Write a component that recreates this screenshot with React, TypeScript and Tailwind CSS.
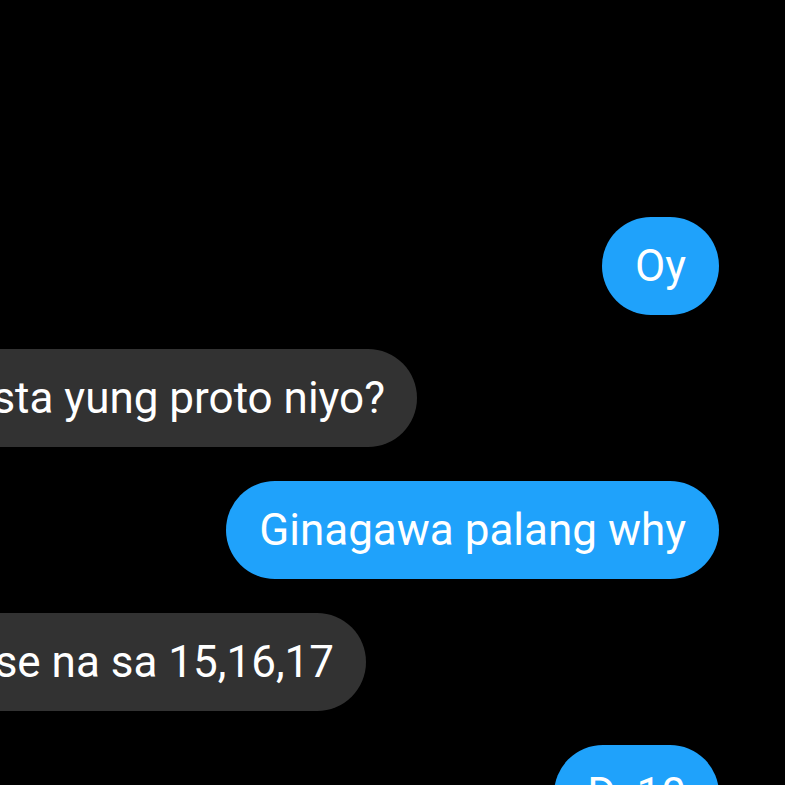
const messages = [
    { from: "me", text: "Oy" },
    { from: "them", text: "Kamusta yung proto niyo?" },
    { from: "me", text: "Ginagawa palang why" },
    { from: "them", text: "Defense na sa 15,16,17" },
    { from: "me", text: "D. 10" },
];

const rightEdge: Record<string, string> = {
    "Kamusta yung proto niyo?": "w-[417px]",
    "Defense na sa 15,16,17": "w-[366px]",
};

export default function App() {
    return (
        <div
            className="h-[785px] w-[785px] overflow-hidden bg-black pt-[217px] flex flex-col gap-[34px]"
            style={{ fontFamily: "Roboto, 'Noto Sans', sans-serif" }}
        >
            {messages.map((m, i) =>
                m.from === "me" ? (
                    <div key={i} className="flex shrink-0 justify-end pr-[66px]">
                        <div className="rounded-full bg-[#1fa2fb] px-[33px] py-[22px] text-[44px] leading-[54px] text-white whitespace-nowrap">
                            {m.text}
                        </div>
                    </div>
                ) : (
                    <div key={i} className={`flex shrink-0 justify-end overflow-hidden ${rightEdge[m.text]}`}>
                        <div className="shrink-0 rounded-full bg-[#323232] px-[32px] py-[22px] text-[44px] leading-[54px] text-white whitespace-nowrap">
                            {m.text}
                        </div>
                    </div>
                )
            )}
        </div>
    );
}
